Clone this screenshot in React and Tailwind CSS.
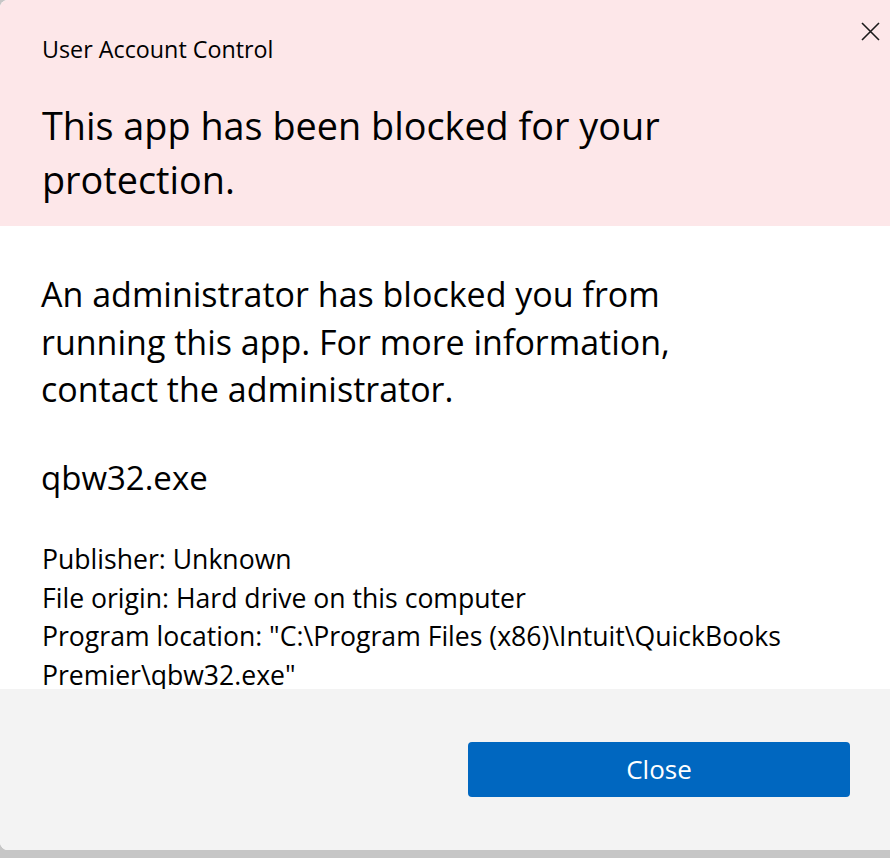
import React from 'react';

const font = { fontFamily: '"Open Sans", "Noto Sans", sans-serif' };

export default function App() {
  return (
    <div className="w-[890px] h-[858px] bg-[#c6c6c6] overflow-hidden" style={font}>
      <div className="relative w-[890px] h-[850px] flex flex-col rounded-tl-[8px] rounded-bl-[8px] overflow-hidden bg-white text-black">
        <button className="absolute left-[861px] top-[22px] w-[19px] h-[19px]">
          <svg viewBox="0 0 19 19" width="19" height="19" fill="none" stroke="#1a1a1a" strokeWidth="1.6">
            <path d="M1 1 L18 18 M18 1 L1 18" />
          </svg>
        </button>

        <div className="bg-[#fde7e9] h-[226px] shrink-0 pl-[42px] pt-[33px]">
          <div className="text-[23.3px] leading-[32px]">User Account Control</div>
          <h1 className="mt-[34px] text-[37.8px] leading-[54px] w-[680px]">
            This app has been blocked for your protection.
          </h1>
        </div>

        <div className="h-[463px] shrink-0 overflow-hidden pl-[41px] pt-[45px]">
          <p className="text-[34px] leading-[47.5px] w-[670px]">
            An administrator has blocked you from running this app. For more information, contact the administrator.
          </p>
          <p className="mt-[40px] text-[33px] leading-[47.5px]">qbw32.exe</p>
          <div className="mt-[39px] text-[26.6px] leading-[38.5px] w-[800px] pl-[1px]">
            <div>Publisher: Unknown</div>
            <div>File origin: Hard drive on this computer</div>
            <div>Program location: "C:\Program Files (x86)\Intuit\QuickBooks Premier\qbw32.exe"</div>
          </div>
        </div>

        <div className="flex-1 bg-[#f3f3f3] flex items-center justify-end pr-[40px]">
          <button className="w-[382px] h-[55px] bg-[#0067c0] rounded-[4px] text-white text-[26px]">
            Close
          </button>
        </div>
      </div>
    </div>
  );
}
